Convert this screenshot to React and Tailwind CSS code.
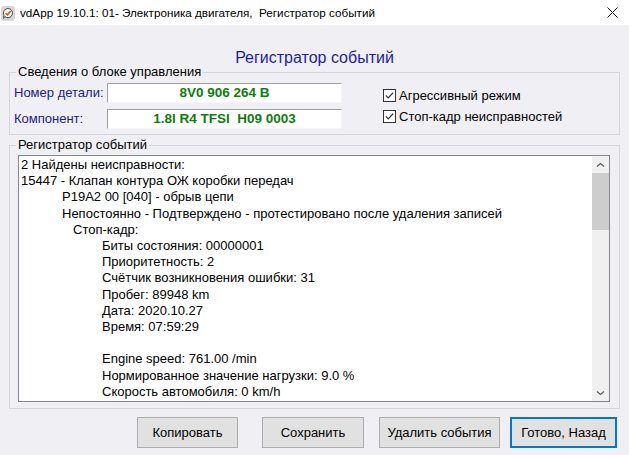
import React from 'react';

const logLines = [
  { indent: 'pl-0', text: '2 Найдены неисправности:' },
  { indent: 'pl-0', text: '15447 - Клапан контура ОЖ коробки передач' },
  { indent: 'pl-[41px]', text: 'P19A2 00 [040] - обрыв цепи' },
  { indent: 'pl-[41px]', text: 'Непостоянно - Подтверждено - протестировано после удаления записей' },
  { indent: 'pl-[52px]', text: 'Стоп-кадр:' },
  { indent: 'pl-[81px]', text: 'Биты состояния: 00000001' },
  { indent: 'pl-[81px]', text: 'Приоритетность: 2' },
  { indent: 'pl-[81px]', text: 'Счётчик возникновения ошибки: 31' },
  { indent: 'pl-[81px]', text: 'Пробег: 89948 km' },
  { indent: 'pl-[81px]', text: 'Дата: 2020.10.27' },
  { indent: 'pl-[81px]', text: 'Время: 07:59:29' },
  { indent: 'pl-[81px]', text: '\u00a0' },
  { indent: 'pl-[81px]', text: 'Engine speed: 761.00 /min' },
  { indent: 'pl-[81px]', text: 'Нормированное значение нагрузки: 9.0 %' },
  { indent: 'pl-[81px]', text: 'Скорость автомобиля: 0 km/h' },
  { indent: 'pl-[81px]', text: 'Охлаждающая жидкость: 100.00 °C' },
];

const AppIcon = () => (
  <svg width="14" height="15" viewBox="0 0 14 15">
    <rect x="0" y="0" width="14" height="15" rx="3" fill="#d6d6d6" />
    <path
      d="M7 2.5 A4.6 4.6 0 1 1 3.9 10.6 L2.6 12.4 L3 9.2 A4.6 4.6 0 0 1 7 2.5 Z"
      fill="#fff"
      stroke="#4a4a4a"
      strokeWidth="1"
    />
    <path d="M4.7 7 L6.5 8.9 L9.6 5" stroke="#e2572c" strokeWidth="1.7" fill="none" />
  </svg>
);

const CheckBox = ({ label }) => (
  <div className="flex h-[13px] items-center">
    <svg width="13" height="13" viewBox="0 0 13 13">
      <rect x="0.5" y="0.5" width="12" height="12" fill="#fff" stroke="#333" />
      <path d="M2.8 6.4 L5.2 8.9 L10.2 3.6" stroke="#333" strokeWidth="1.3" fill="none" />
    </svg>
    <span className="ml-[3px] text-[13px] leading-[13px] text-black">{label}</span>
  </div>
);

const InfoRow = ({ label, value }) => (
  <div className="flex h-[20px] items-center">
    <span className="w-[93px] text-[13px] leading-[16px] text-[#20208a]">{label}</span>
    <div className="flex h-[20px] w-[235px] items-center justify-center border-t border-l border-b border-r border-t-[#a0a0a0] border-l-[#a0a0a0] border-b-[#f6f6f6] border-r-[#f6f6f6] bg-white">
      <span className="whitespace-pre text-[13.5px] font-bold leading-[16px] text-[#0d7d0d]">{value}</span>
    </div>
  </div>
);

const WinButton = ({ children, className }) => (
  <button
    type="button"
    className={`h-[31px] bg-[#e1e1e1] text-[13px] leading-[16px] text-black ${className}`}
  >
    {children}
  </button>
);

const Chevron = ({ down }) => (
  <svg width="9" height="6" viewBox="0 0 9 6">
    <path
      d={down ? 'M1 1.5 L4.5 4.5 L8 1.5' : 'M1 4.5 L4.5 1.5 L8 4.5'}
      stroke="#606060"
      strokeWidth="1.3"
      fill="none"
    />
  </svg>
);

export default function App() {
  return (
    <div className="flex h-[455px] w-[629px] flex-col overflow-hidden bg-[#f0f0f4] font-['Liberation_Sans',Arial,sans-serif] text-black">
      {/* title bar */}
      <div className="flex h-[25px] items-center bg-white">
        <div className="ml-[1px] mt-[1px]">
          <AppIcon />
        </div>
        <span className="ml-[5px] whitespace-pre text-[11.7px] leading-[14px] text-black">
          vdApp 19.10.1: 01- Электроника двигателя,  Регистратор событий
        </span>
        <svg className="ml-auto mr-[11px]" width="11" height="11" viewBox="0 0 11 11">
          <path d="M0.5 0.5 L10.5 10.5 M10.5 0.5 L0.5 10.5" stroke="#111" strokeWidth="1" />
        </svg>
      </div>

      <div className="h-[39px] pt-[25px] text-center text-[16px] leading-[16px] text-[#1e1e9e]">
        Регистратор событий
      </div>

      <fieldset className="mx-[9px] w-[611px] border border-[#d5d5dc] pb-[5px] pl-[4px]">
        <legend className="ml-[2px] px-[2px] text-[13px] leading-[16px]">Сведения о блоке управления</legend>
        <div className="flex">
          <div className="flex flex-col gap-[6px] pt-[3px]">
            <InfoRow label="Номер детали:" value="8V0 906 264 B" />
            <InfoRow label="Компонент:" value="1.8l R4 TFSI  H09 0003" />
          </div>
          <div className="ml-[41px] flex flex-col gap-[8px] pt-[9px]">
            <CheckBox label="Агрессивный режим" />
            <CheckBox label="Стоп-кадр неисправностей" />
          </div>
        </div>
      </fieldset>

      <fieldset className="mx-[9px] mt-[2px] w-[611px] border border-[#d5d5dc] pb-[6px] pl-[8px] pr-[9px]">
        <legend className="-ml-[2px] px-[2px] text-[13px] leading-[16px]">Регистратор событий</legend>
        <div className="mt-[2px] flex h-[247px] border border-[#828790] bg-white">
          <div className="flex-1 overflow-hidden pl-[2px] pt-[1px] text-[13px] leading-[16.2px]">
            {logLines.map((line, i) => (
              <div key={i} className={`whitespace-nowrap ${line.indent}`}>
                {line.text}
              </div>
            ))}
          </div>
          <div className="flex w-[17px] flex-col bg-[#f0f0f0]">
            <div className="flex h-[17px] items-center justify-center">
              <Chevron />
            </div>
            <div className="h-[57px] bg-[#cdcdcd]" />
            <div className="flex-1" />
            <div className="flex h-[17px] items-center justify-center">
              <Chevron down />
            </div>
          </div>
        </div>
      </fieldset>

      <div className="mt-[8px] flex">
        <WinButton className="ml-[137px] w-[101px] border border-[#adadad]">Копировать</WinButton>
        <WinButton className="ml-[24px] w-[102px] border border-[#adadad]">Сохранить</WinButton>
        <WinButton className="ml-[15px] w-[121px] border border-[#adadad]">Удалить события</WinButton>
        <WinButton className="ml-[10px] w-[107px] border-2 border-[#0078d7]">Готово, Назад</WinButton>
      </div>
    </div>
  );
}
